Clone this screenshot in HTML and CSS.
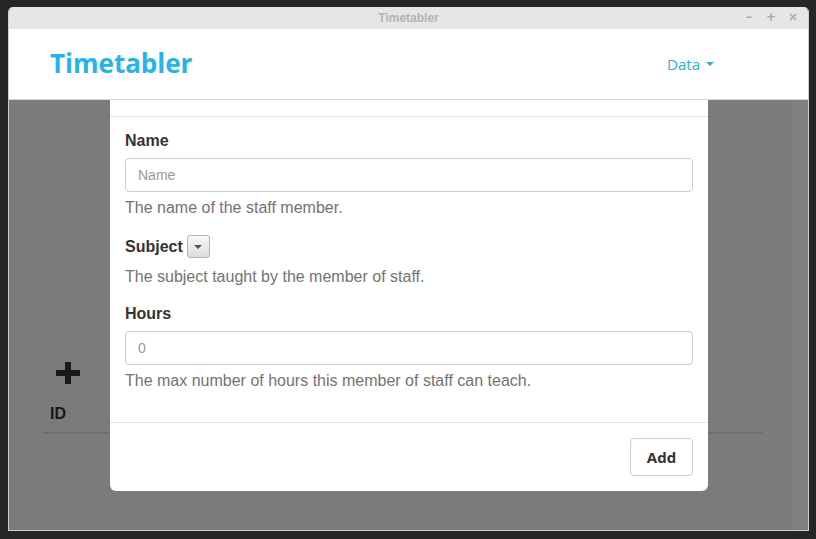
FILE: index.html
```html
<!DOCTYPE html>
<html>
<head>
<meta charset="utf-8">
<link rel="stylesheet" href="styles.css">
</head>
<body>
<div class="window">
  <div class="titlebar">
    <span class="title">Timetabler</span>
    <div class="controls"><span class="ctl">&#8211;</span><span class="ctl">+</span><span class="ctl">&#215;</span></div>
  </div>
  <nav class="navbar">
    <div class="brand">Timetabler</div>
    <div class="menu">Data <span class="caret"></span></div>
  </nav>
  <div class="content">
    <div class="page">
      <div class="page-inner">
        <svg class="plus" width="24" height="22" viewBox="0 0 24 22"><path d="M9 0h6v8h9v6h-9v8H9v-8H0V8h9z" fill="#333"/></svg>
        <div class="table-head">ID</div>
      </div>
      <div class="scrollbar"></div>
    </div>
    <div class="backdrop"></div>
    <div class="modal">
      <div class="modal-header"></div>
      <div class="modal-body">
        <div class="group">
          <div class="label">Name</div>
          <div class="input placeholder">Name</div>
          <div class="help">The name of the staff member.</div>
        </div>
        <div class="group">
          <div class="label-row"><span class="label">Subject</span><span class="select-btn"><span class="mini-caret"></span></span></div>
          <div class="help help-sub">The subject taught by the member of staff.</div>
        </div>
        <div class="group">
          <div class="label">Hours</div>
          <div class="input placeholder">0</div>
          <div class="help">The max number of hours this member of staff can teach.</div>
        </div>
      </div>
      <div class="modal-footer">
        <button class="btn">Add</button>
      </div>
    </div>
  </div>
</div>
</body>
</html>
```
FILE: styles.css
```css
html, body {
  margin: 0;
  padding: 0;
}
body {
  width: 816px;
  height: 539px;
  background: #262626;
  overflow: hidden;
}
.window {
  margin: 7px 0 0 8px;
  width: 801px;
  height: 524px;
  box-sizing: border-box;
  border: 1px solid #cfcfcf;
  border-top: none;
  border-radius: 5px 5px 0 0;
  display: flex;
  flex-direction: column;
  overflow: hidden;
}
.titlebar {
  height: 22px;
  flex: none;
  background: #e6e6e4;
  display: flex;
  align-items: center;
  justify-content: center;
  position: relative;
}
.title {
  font-family: "Liberation Sans", Arial, sans-serif;
  font-weight: bold;
  font-size: 12px;
  color: #b4b4b4;
}
.controls {
  position: absolute;
  right: 9px;
  top: 3px;
  display: flex;
  gap: 10px;
}
.ctl {
  font-family: "DejaVu Sans", sans-serif;
  font-weight: bold;
  font-size: 12px;
  color: #ababab;
  width: 12px;
  text-align: center;
}
.navbar {
  height: 70px;
  flex: none;
  background: #fff;
  border-bottom: 1px solid #d8d8d8;
  display: flex;
  align-items: center;
  justify-content: space-between;
  padding: 0 94px 0 41px;
  position: relative;
  z-index: 3;
}
.brand {
  font-family: "Open Sans", sans-serif;
  font-weight: bold;
  font-size: 26px;
  color: #23b4eb;
  margin-top: -2px;
}
.menu {
  font-family: "Open Sans", sans-serif;
  font-size: 15px;
  color: #2aaee0;
  display: flex;
  align-items: center;
  gap: 6px;
}
.caret {
  width: 0;
  height: 0;
  border-left: 4px solid transparent;
  border-right: 4px solid transparent;
  border-top: 4px solid #2aaee0;
}
.content {
  flex: 1;
  position: relative;
  overflow: hidden;
}
.page {
  height: 100%;
  background: #f6f6f6;
  display: flex;
}
.page-inner {
  flex: 1;
  padding: 262px 30px 0 33px;
}
.plus {
  display: block;
  margin-left: 14px;
}
.table-head {
  margin-top: 21px;
  padding: 0 0 9px 8px;
  border-bottom: 2px solid #dddddd;
  font-family: "Liberation Sans", Arial, sans-serif;
  font-weight: bold;
  font-size: 16px;
  color: #333;
}
.scrollbar {
  width: 16px;
  background: #ffffff;
}
.backdrop {
  position: absolute;
  inset: 0;
  background: rgba(0, 0, 0, 0.5);
  z-index: 1;
}
.modal {
  position: absolute;
  left: 101px;
  top: -6px;
  width: 598px;
  background: #fff;
  border-radius: 6px;
  z-index: 2;
  font-family: "Liberation Sans", Arial, sans-serif;
}
.modal-header {
  height: 22px;
  border-bottom: 1px solid #e5e5e5;
}
.modal-body {
  padding: 14px 15px 30px;
  display: flex;
  flex-direction: column;
  gap: 16px;
}
.group {
  display: flex;
  flex-direction: column;
}
.label {
  font-weight: bold;
  font-size: 16px;
  line-height: 20px;
  color: #333;
}
.group > .label {
  margin-bottom: 7px;
}
.label-row {
  display: flex;
  align-items: center;
  gap: 4px;
  height: 23px;
}
.select-btn {
  width: 21px;
  height: 21px;
  border: 1px solid #b5b5b5;
  border-radius: 3px;
  background: linear-gradient(#f8f8f8, #dcdcdc);
  display: flex;
  align-items: center;
  justify-content: center;
}
.mini-caret {
  width: 0;
  height: 0;
  border-left: 4px solid transparent;
  border-right: 4px solid transparent;
  border-top: 4px solid #555;
}
.input {
  height: 34px;
  box-sizing: border-box;
  border: 1px solid #cccccc;
  border-radius: 4px;
  padding: 0 12px;
  display: flex;
  align-items: center;
  font-size: 14px;
  color: #999;
}
.help {
  margin-top: 5px;
  font-size: 16px;
  line-height: 22px;
  color: #737373;
}
.help-sub {
  margin-top: 8px;
}
.modal-footer {
  border-top: 1px solid #e5e5e5;
  padding: 15px 15px 15px;
  display: flex;
  justify-content: flex-end;
}
.btn {
  width: 63px;
  height: 38px;
  border: 1px solid #cccccc;
  border-radius: 4px;
  background: #fff;
  font-family: "Open Sans", sans-serif;
  font-weight: bold;
  font-size: 15px;
  color: #333;
  padding: 0;
}
```
